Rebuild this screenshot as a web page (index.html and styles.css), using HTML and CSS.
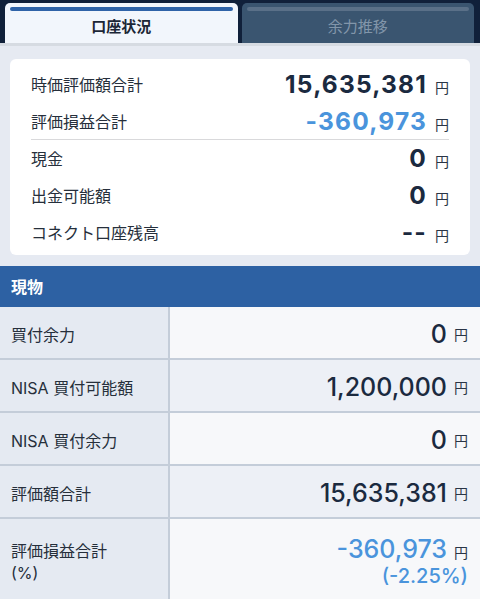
FILE: index.html
```html
<!DOCTYPE html>
<html lang="ja">
<head>
<meta charset="utf-8">
<link rel="stylesheet" href="styles.css">
</head>
<body>
<div class="tabs">
  <div class="tab tab-active"><div class="tab-bar"></div><div class="tab-label">口座状況</div></div>
  <div class="tab tab-idle"><div class="tab-bar"></div><div class="tab-label">余力推移</div></div>
</div>
<div class="tabs-rule"></div>

<div class="card">
  <div class="crow"><span class="clabel">時価評価額合計</span><span class="cval"><span class="num">15,635,381</span><span class="unit">円</span></span></div>
  <div class="crow sep"><span class="clabel">評価損益合計</span><span class="cval"><span class="num neg">-360,973</span><span class="unit">円</span></span></div>
  <div class="crow"><span class="clabel">現金</span><span class="cval"><span class="num">0</span><span class="unit">円</span></span></div>
  <div class="crow"><span class="clabel">出金可能額</span><span class="cval"><span class="num">0</span><span class="unit">円</span></span></div>
  <div class="crow"><span class="clabel">コネクト口座残高</span><span class="cval"><span class="num">--</span><span class="unit">円</span></span></div>
</div>

<div class="section">現物</div>
<div class="table">
  <div class="trow"><div class="tlabel">買付余力</div><div class="tval odd"><span class="tnum">0</span><span class="unit">円</span></div></div>
  <div class="trow"><div class="tlabel">NISA 買付可能額</div><div class="tval even"><span class="tnum">1,200,000</span><span class="unit">円</span></div></div>
  <div class="trow"><div class="tlabel">NISA 買付余力</div><div class="tval odd"><span class="tnum">0</span><span class="unit">円</span></div></div>
  <div class="trow"><div class="tlabel">評価額合計</div><div class="tval even"><span class="tnum">15,635,381</span><span class="unit">円</span></div></div>
  <div class="trow tall"><div class="tlabel multi">評価損益合計<br>(%)</div><div class="tval odd stack"><div class="line"><span class="tnum neg">-360,973</span><span class="unit">円</span></div><div class="pct neg">(-2.25%)</div></div></div>
</div>
</body>
</html>
```

FILE: styles.css
```css
html, body {
  margin: 0;
  padding: 0;
}
body {
  width: 480px;
  height: 599px;
  overflow: hidden;
  background: #e6eaf2;
  font-family: "Noto Sans CJK JP", sans-serif;
  color: #1d2838;
}
.tabs {
  display: flex;
  gap: 4px;
  height: 43px;
  padding: 3px 6px 0 5px;
  box-sizing: border-box;
  background: #10203a;
}
.tab {
  flex: 1;
  border-radius: 5px 5px 0 0;
  display: flex;
  flex-direction: column;
}
.tab-bar {
  height: 4px;
  border-radius: 2px;
  margin: 4px 5px 0;
}
.tab-label {
  text-align: center;
  font-size: 15px;
  line-height: 20px;
  margin-top: 5px;
}
.tab-active {
  background: #f2f6fc;
}
.tab-active .tab-bar {
  background: #2f63a8;
}
.tab-active .tab-label {
  font-weight: 700;
  color: #1b2636;
}
.tab-idle {
  background: #3a5570;
}
.tab-idle .tab-bar {
  background: #5a7088;
}
.tab-idle .tab-label {
  color: #8296aa;
}
.tabs-rule {
  height: 3px;
  background: #d6dbe2;
}
.card {
  margin: 13px 10px 11px;
  background: #ffffff;
  border-radius: 6px;
  padding: 7px 21px 5px 21px;
}
.crow {
  height: 36.8px;
  display: flex;
  align-items: center;
  justify-content: space-between;
  box-sizing: border-box;
}
.crow.sep {
  border-bottom: 1px solid #d9d9db;
}
.clabel {
  font-size: 16px;
  color: #262f3b;
}
.cval {
  display: flex;
  align-items: baseline;
}
.num {
  font-family: "Inter", "Liberation Sans", sans-serif;
  font-weight: 700;
  font-size: 24.5px;
  color: #1b2a3f;
  letter-spacing: 1.2px;
  margin-right: -1px;
}
.neg {
  color: #4a94dc;
}
.unit {
  font-family: "Noto Sans CJK JP", sans-serif;
  font-size: 14px;
  color: #2a3546;
  margin-left: 9px;
}
.section {
  height: 41px;
  background: #2d61a3;
  color: #ffffff;
  font-weight: 700;
  font-size: 16px;
  line-height: 41px;
  padding-left: 11px;
}
.trow {
  display: flex;
  height: 53px;
  border-bottom: 2px solid #c4cdd9;
  box-sizing: border-box;
}
.trow.tall {
  height: 90px;
  border-bottom: none;
}
.tlabel {
  width: 170px;
  flex: none;
  background: #e5eaf2;
  border-right: 2px solid #c4cdd9;
  font-family: "Inter", "Noto Sans CJK JP", sans-serif;
  font-size: 16px;
  color: #262f3b;
  padding-left: 11px;
  padding-top: 3px;
  box-sizing: border-box;
  display: flex;
  align-items: center;
}
.tlabel.multi {
  align-items: flex-start;
  padding-top: 21px;
  line-height: 22px;
}
.tval {
  flex: 1;
  display: flex;
  justify-content: flex-end;
  align-items: center;
  padding-right: 12px;
  padding-top: 3px;
}
.tval .unit {
  margin-left: 7px;
}
.odd {
  background: #f7f8fa;
}
.even {
  background: #edf0f6;
}
.tnum {
  font-family: "Inter", "Liberation Sans", sans-serif;
  font-weight: 500;
  font-size: 25px;
  color: #1b2a3f;
}
.tnum.neg {
  color: #4a94dc;
}
.tval .line {
  display: flex;
  align-items: baseline;
  justify-content: flex-end;
  height: 28px;
}
.stack {
  flex-direction: column;
  align-items: flex-end;
  justify-content: flex-start;
  padding-top: 15px;
}
.pct {
  font-family: "Inter", "Liberation Sans", sans-serif;
  font-size: 20px;
  line-height: 28px;
  font-weight: 500;
}
```
